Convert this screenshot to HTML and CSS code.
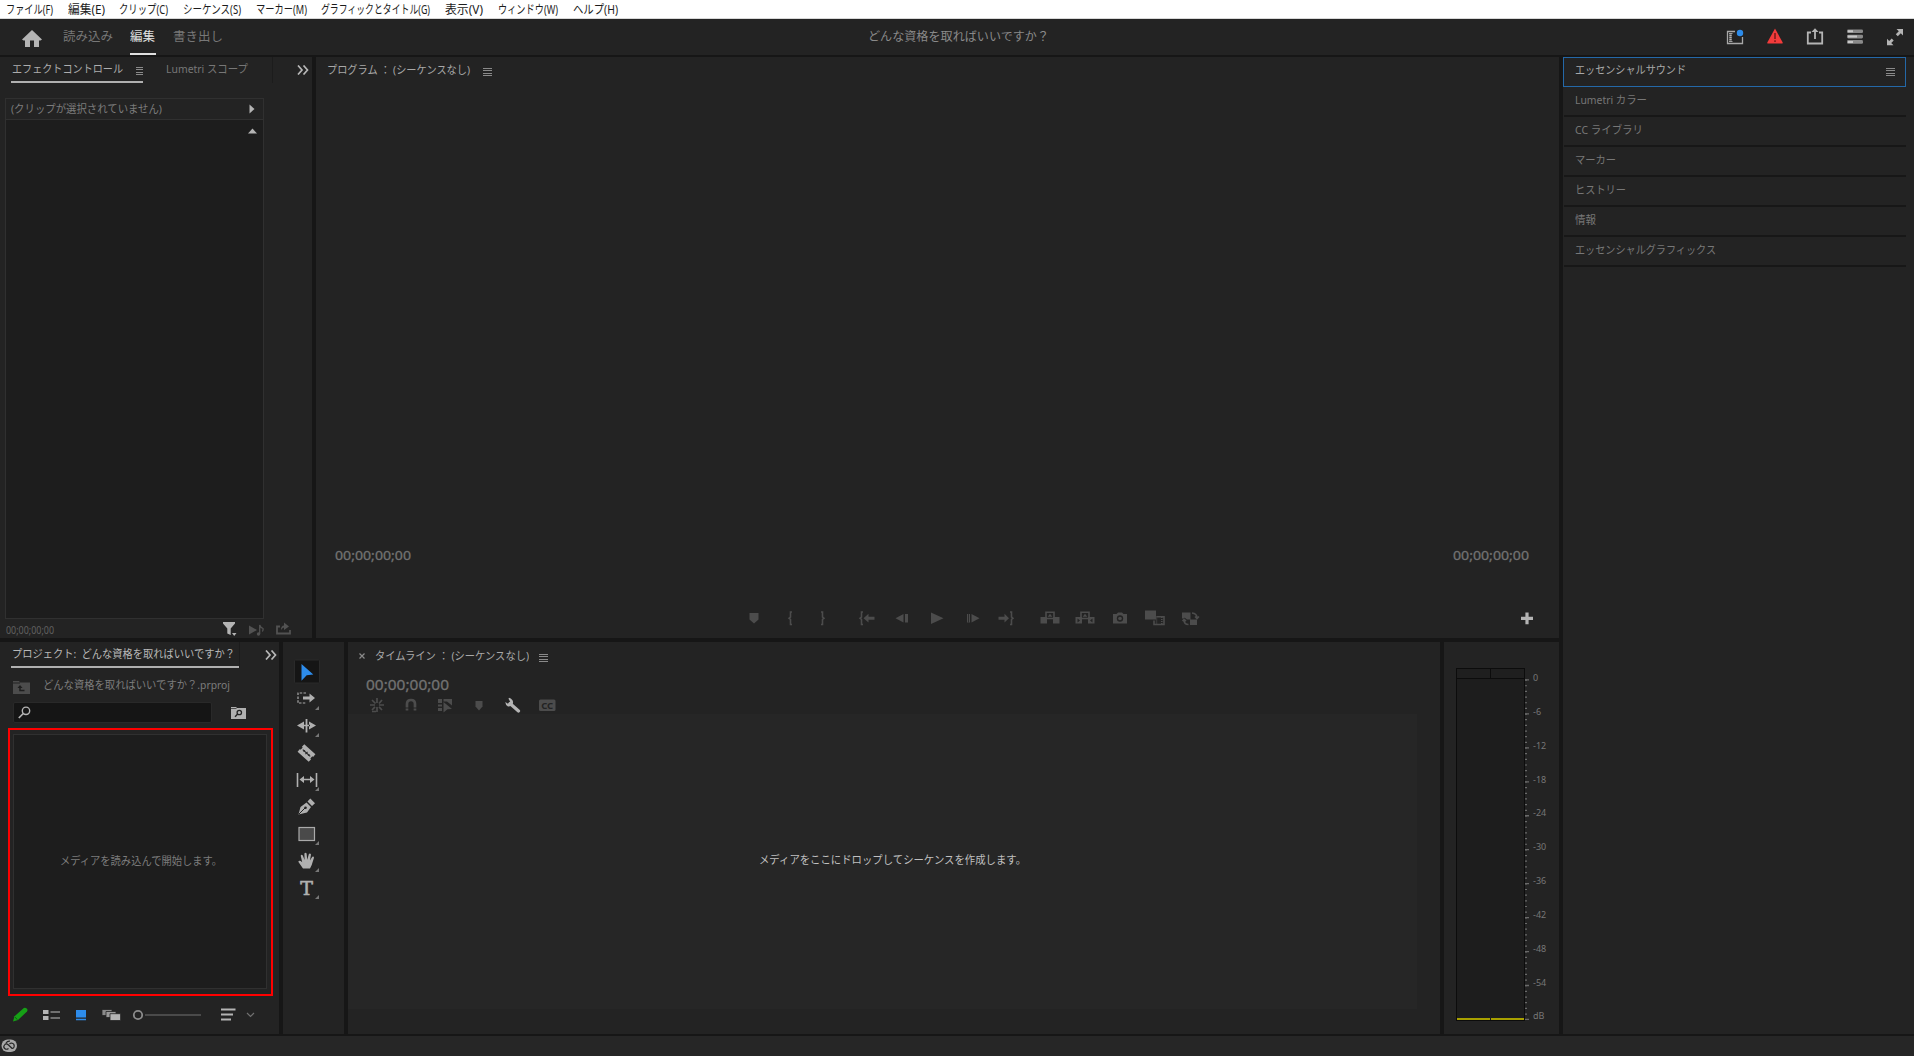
FILE: index.html
```
<!DOCTYPE html>
<html lang="ja">

<head>
    <meta charset="UTF-8">
    <title>どんな資格を取ればいいですか？</title>
    <link rel="stylesheet" href="styles.css">
</head>

<body>

    <nav class="menubar">
        <span class="fit" data-w="47">ファイル(F)</span>
        <span class="fit" data-w="37">編集(E)</span>
        <span class="fit" data-w="49">クリップ(C)</span>
        <span class="fit" data-w="58">シーケンス(S)</span>
        <span class="fit" data-w="51">マーカー(M)</span>
        <span class="fit" data-w="109">グラフィックとタイトル(G)</span>
        <span class="fit" data-w="38">表示(V)</span>
        <span class="fit" data-w="60">ウィンドウ(W)</span>
        <span class="fit" data-w="45">ヘルプ(H)</span>
    </nav>

    <header class="header">
        <svg class="home" width="20" height="18" viewBox="0 0 20 18"><path d="M10 0 20 9.500 18.500 10.500H17V17H12V10.500H8V17H3V10.500H1.500L0 9.500Z" fill="#b4b4b4"/></svg>
        <div class="modes">
            <span class="mode"><span class="fit" data-w="50">読み込み</span></span>
            <span class="mode active"><span class="fit" data-w="25">編集</span></span>
            <span class="mode"><span class="fit" data-w="50">書き出し</span></span>
        </div>
        <div class="doc-title"><span class="fit" data-w="181">どんな資格を取ればいいですか？</span></div>
        <div class="header-icons">
            <svg width="20" height="20" viewBox="0 0 20 20"><path d="M10 4.500H2.500V16.500H17.500V10" fill="none" stroke="#a8a8a8" stroke-width="1.300"/><path d="M5.500 6V15" stroke="#b0b0b0" stroke-width="2.500" stroke-dasharray="1.500 .5"/><path d="M4 6.500H7.500M4 14.500H7.500" stroke="#a0a0a0"/><circle cx="15" cy="6" r="3.200" fill="#2d8ceb"/></svg>
            <svg width="20" height="20" viewBox="0 0 20 20"><path d="M10 1.500 17.700 15.500Q17.800 16.600 17 16.600H3Q2.200 16.600 2.300 15.500Z" fill="#f43b3b"/><path d="M10 6V12M10 13.200V15" stroke="#8f1f1f" stroke-width="1.800"/></svg>
            <svg width="20" height="20" viewBox="0 0 20 20"><path d="M6 5.500H2.800V16.500H17.200V5.500H14M10 12V3" fill="none" stroke="#b4b4b4" stroke-width="1.800"/><path d="M6.500 5 10 1.200 13.500 5Z" fill="#b4b4b4"/></svg>
            <svg width="20" height="20" viewBox="0 0 20 20"><g fill="#8a8a8a"><rect x="2" y="2.500" width="16" height="3.600" rx="1.300"/><rect x="2" y="7.800" width="16" height="3.600" rx="1.300"/><rect x="2" y="13.100" width="16" height="3.600" rx="1.300"/></g><path d="M3 4.300H8M3 9.600H12M3 14.900H8" stroke="#c8c8c8" stroke-width="2"/></svg>
            <svg width="20" height="20" viewBox="0 0 20 20"><path d="M11.500 2H18V8.500L15.800 6.300 12.800 9.300 10.800 7.300 13.800 4.300ZM8.500 18.200H2V11.700L4.200 13.900 6.700 11.400 8.700 13.400 6.200 15.900Z" fill="#b4b4b4"/></svg>
        </div>
    </header>

    <div class="workspace">
        <div class="main-area">
            <div class="upper">

                <!-- Effect controls -->
                <section class="panel effects">
                    <div class="tabs">
                        <div class="tab active"><span class="fit" data-w="111">エフェクトコントロール</span><i class="burger"></i></div>
                        <div class="tab"><span class="fit" data-w="82">Lumetri スコープ</span></div>
                        <i class="tab-line"></i>
                        <svg class="more" width="12" height="10" viewBox="0 0 12 10"><path d="M1 .5 5 5 1 9.500M6.500 .5 10.500 5 6.500 9.500" fill="none" stroke="#b8b8b8" stroke-width="1.700"/></svg>
                    </div>
                    <div class="clip-box">
                        <div class="clip-head">
                            <span class="fit" data-w="151">(クリップが選択されていません)</span>
                            <svg width="6" height="10" viewBox="0 0 6 10"><path d="M.5 .5V9.500L5.500 5Z" fill="#b4b4b4"/></svg>
                        </div>
                        <div class="clip-body">
                            <svg width="9" height="6" viewBox="0 0 9 6"><path d="M0 5.500H9L4.500 .5Z" fill="#b4b4b4"/></svg>
                        </div>
                    </div>
                    <div class="effects-foot">
                        <span class="fit" data-w="48">00;00;00;00</span>
                        <svg class="funnel" width="15" height="15" viewBox="0 0 15 15"><path d="M0 0H12V1.500L7.700 6.500V13L4.300 11.500V6.500L0 1.500ZM9 11H13.500L11.200 14Z" fill="#b4b4b4"/></svg>
                        <svg class="play-note" width="16" height="12" viewBox="0 0 16 12"><path d="M0 1.500V10.500L8 6Z" fill="#525252"/><path d="M10.700 10V1Q11.500 3.500 14 4.500 14.500 6 13.300 7.500" fill="none" stroke="#525252" stroke-width="1.300"/><circle cx="9.500" cy="10" r="1.700" fill="#525252"/></svg>
                        <svg class="export" width="16" height="13" viewBox="0 0 16 13"><path d="M4 4.500H1V11.500H14V8" fill="none" stroke="#525252" stroke-width="1.800"/><path d="M5 8Q5 3.500 8 3.500V.5L13 4.500 8 8V5.500Q6.500 5.500 5 8Z" fill="#525252"/></svg>
                    </div>
                </section>

                <!-- Program monitor -->
                <section class="panel program">
                    <div class="panel-title"><span class="fit" data-w="143">プログラム ： (シーケンスなし)</span><i class="burger"></i></div>
                    <div class="timecodes">
                        <span class="fit" data-w="76">00;00;00;00</span>
                        <span class="fit" data-w="76">00;00;00;00</span>
                    </div>
                    <div class="transport">
                        <svg viewBox="0 0 24 24"><path d="M7.500 7H16.500V13.500L12 17.500 7.500 13.500Z"/></svg>
                        <svg viewBox="0 0 24 24"><path class="line" d="M14 6H12.500V11L11 12.200 12.500 13.500V18.500H14"/></svg>
                        <svg viewBox="0 0 24 24"><path class="line" d="M10 6H11.500V11L13 12.200 11.500 13.500V18.500H10"/></svg>
                        <svg viewBox="0 0 24 24"><path class="line" d="M8 6H6.500V11L5 12.200 6.500 13.500V18.500H8"/><path d="M8.500 12.200 13.500 7.800V10.700H19.500V13.700H13.500V16.600Z"/></svg>
                        <svg viewBox="0 0 24 24"><path d="M5.500 12.200 13.500 8V16.500ZM15 8H18V16.500H15Z"/></svg>
                        <svg viewBox="0 0 24 24"><path d="M6 6.500V18L18.500 12.300Z"/></svg>
                        <svg viewBox="0 0 24 24"><path d="M18.500 12.200 10.500 8V16.500ZM6 8H9V16.500H6Z"/><path d="M7.500 8V16.500" stroke="#232323" stroke-width=".8"/></svg>
                        <svg viewBox="0 0 24 24"><path class="line" d="M16 6H17.500V11L19 12.200 17.500 13.500V18.500H16"/><path d="M15 12.200 10.500 7.800V10.700H4.500V13.700H10.500V16.600Z"/></svg>
                        <svg viewBox="0 0 24 24"><path d="M2.500 11H9V17.500H2.500ZM15 11H21.500V17.500H15ZM9.700 10.700H14.300L12 7.700Z"/><path class="line" d="M8 11V6.200H16V11M8.500 12.500H15.500"/></svg>
                        <svg viewBox="0 0 24 24"><path d="M2.500 11H9V17.500H2.500ZM15 11H21.500V17.500H15ZM9.700 10.700H14.300L12 7.700Z"/><path class="line" d="M8 11V6.200H16V11M8.500 12.500H15.500"/><path class="cut" d="M4.500 12.500V16.500L7 14.500ZM19.500 12.500V16.500L17 14.500Z"/></svg>
                        <svg viewBox="0 0 24 24"><path d="M5 8H8.500L10 6.500H14L15.500 8H19V17.500H5Z"/><circle class="cut" cx="12" cy="12.500" r="3.200"/><circle cx="12" cy="12.500" r="1.800"/></svg>
                        <svg viewBox="0 0 24 24"><path d="M2 4.500H13V13.500H2Z"/><path class="line" d="M13.500 10.800H21V18.500H11V14.500"/><path class="line" stroke-dasharray="1 1" d="M13.500 10.500V18.500M18.800 11V18.500"/></svg>
                        <svg viewBox="0 0 24 24"><path d="M4 6.500H12.500V13.500H9L6.500 11.500V12.500H4ZM12 13.500H19V19H12Z"/><path class="line" d="M14 7Q19 7.500 19 12M17 10.500 19 12.500 21 10.500M6 14Q6 18.500 10.500 18.500M4.500 15 6 13.500 8 15"/></svg>
                        <svg class="plus" viewBox="0 0 24 24"><path d="M10.400 6.400H13.600V10.700H18V13.900H13.600V18.200H10.400V13.900H6V10.700H10.400Z"/></svg>
                    </div>
                </section>
            </div>

            <div class="lower">

                <!-- Project bin -->
                <section class="panel project">
                    <div class="tabs">
                        <div class="tab active"><span class="fit" data-w="223">プロジェクト:  どんな資格を取ればいいですか？</span></div>
                        <i class="tab-line"></i>
                        <svg class="more" width="12" height="10" viewBox="0 0 12 10"><path d="M1 .5 5 5 1 9.500M6.500 .5 10.500 5 6.500 9.500" fill="none" stroke="#b8b8b8" stroke-width="1.700"/></svg>
                    </div>
                    <div class="bin-path">
                        <svg width="17" height="13" viewBox="0 0 17 13"><path d="M0 0H6L7 1.500H17V13H0Z" fill="#4c4c4c"/><path d="M0 2H7" stroke="#232323"/><path d="M11.500 9.500H7V6" fill="none" stroke="#1e1e1e" stroke-width="1.500"/><path d="M4.500 7 7 4 9.500 7Z" fill="#1e1e1e"/></svg>
                        <span class="fit" data-w="187">どんな資格を取ればいいですか？.prproj</span>
                    </div>
                    <div class="search-row">
                        <div class="search-box"><svg width="13" height="13" viewBox="0 0 13 13"><circle cx="8" cy="4.800" r="3.700" fill="none" stroke="#b4b4b4" stroke-width="1.400"/><path d="M5.300 7.500.8 12" stroke="#b4b4b4" stroke-width="1.700"/></svg></div>
                        <svg width="15" height="12" viewBox="0 0 15 12"><path d="M0 0H5L6 1H15V12H0Z" fill="#b0b0b0"/><path d="M0 1.500H5.500" stroke="#232323" stroke-width=".7"/><circle cx="8.300" cy="5.500" r="2.200" fill="none" stroke="#232323" stroke-width="1.300"/><path d="M6.700 7 4 9.800" stroke="#232323" stroke-width="1.400"/></svg>
                    </div>
                    <div class="highlight">
                        <div class="dropzone"><span class="fit" data-w="162">メディアを読み込んで開始します。</span></div>
                    </div>
                    <div class="bin-tools">
                        <svg width="15" height="15" viewBox="0 0 15 15"><path d="M0 14.500 1.500 9.300 10.800 1Q12.300 .2 13.700 1.500T14 4.500L5 13Z" fill="#16a016"/><path d="M1.800 10 4.500 12.700" stroke="#0d5a10"/></svg>
                        <svg width="17" height="12" viewBox="0 0 17 12"><path d="M0 1H5.500V5H0ZM0 7H5.500V11H0Z" fill="#b4b4b4"/><path d="M7.500 3H17M7.500 9H17" stroke="#8a8a8a" stroke-width="1.300"/></svg>
                        <svg width="12" height="12" viewBox="0 0 12 12"><path d="M1 1H11V8.500H1ZM1 9.800H11V11.200H1Z" fill="#2d8ceb"/></svg>
                        <svg width="19" height="12" viewBox="0 0 19 12"><g stroke="#232323" stroke-width=".8"><path d="M0 .5H10V6.500H0Z" fill="#8a8a8a"/><path d="M4 2.500H14V8.500H4Z" fill="#999"/><path d="M8 4.700H18.600V11.500H8Z" fill="#b4b4b4"/></g></svg>
                        <svg class="zoom" width="70" height="12" viewBox="0 0 70 12"><circle cx="6" cy="6" r="4.200" fill="none" stroke="#8c8c8c" stroke-width="1.800"/><path d="M13 6H69" stroke="#4a4a4a" stroke-width="1.800"/></svg>
                        <svg class="sort" width="15" height="13" viewBox="0 0 15 13"><path d="M0 1.500H14.500M0 6.500H12M0 11.500H10" stroke="#b4b4b4" stroke-width="2"/></svg>
                        <svg class="chevron" width="9" height="6" viewBox="0 0 9 6"><path d="M1 1 4.500 4.500 8 1" fill="none" stroke="#707070" stroke-width="1.200"/></svg>
                    </div>
                </section>

                <!-- Tools -->
                <section class="panel tools">
                    <svg viewBox="0 0 27 27"><rect x="1.500" y="2" width="25" height="23" rx="1" fill="#151515" stroke="#2a2a2a"/><path d="M8.500 6 20.300 16.500 13.700 17.300 8.500 22.700Z" fill="#2d8ceb"/></svg>
                    <svg viewBox="0 0 27 27"><path d="M13 8H5V18H13" fill="none" stroke="#aaa" stroke-width="1.200" stroke-dasharray="2.500 1.300"/><path d="M10 11.500H16.500V8.500L22 13 16.500 17.500V14.500H10Z"/><path class="corner" d="M26 21V25H22Z"/></svg>
                    <svg viewBox="0 0 27 27"><path d="M12.600 7H14.400V20.500H12.600ZM4 13.500 11 9.500V17.500ZM23 13.500 16 9.500V17.500ZM10 12.700H17V14.300H10Z"/><path class="corner" d="M26 21V25H22Z"/></svg>
                    <svg viewBox="0 0 27 27"><g transform="rotate(42 13.500 14)"><path d="M6 9H21V12.500H20V15.500H21V19H6V15.500H7V12.500H6Z"/><path d="M8.500 14H18.500" stroke="#232323" stroke-width="1.200"/><path d="M10.500 13V15M13.500 12.500V15.500M16.500 13V15" stroke="#232323"/></g></svg>
                    <svg viewBox="0 0 27 27"><path d="M3.700 7H5.300V21H3.700ZM22.700 7H24.300V21H22.700ZM6.500 13.500 11 10V12.800H17V10L21.500 13.500 17 17V14.300H11V17Z"/><path class="corner" d="M26 21V25H22Z"/></svg>
                    <svg viewBox="0 0 27 27"><path d="M5.500 21.500 7.500 14 13.500 9.500 18 14 14 19.500ZM14.500 8.500 17.300 5.500 22 10.200 19 13Z"/><path d="M6 21 12 15" stroke="#232323" stroke-width="1"/><circle cx="12.500" cy="14.800" r="1.300" fill="#232323"/></svg>
                    <svg viewBox="0 0 27 27"><rect x="6" y="7.500" width="15.500" height="13" fill="#4a4a4a" stroke="#aaa" stroke-width="1.200"/><path class="corner" d="M26 21V25H22Z"/></svg>
                    <svg viewBox="0 0 27 27"><path d="M10 21.500 5.300 14.700Q6.300 12.800 9.200 15.200L7.700 8.700Q8.300 7 9.800 8.500L11.600 13 11.400 6.400Q12.500 5 13.600 6.400L14.200 12.700 15.900 6.900Q17.300 5.900 18 7.500L17 13.500 19.300 9.700Q20.800 9.100 21 10.700L18.700 18 17 21.500Z"/><path class="corner" d="M26 21V25H22Z"/></svg>
                    <svg viewBox="0 0 27 27"><text x="13.500" y="20.500" text-anchor="middle" class="type-tool">T</text><path class="corner" d="M26 21V25H22Z"/></svg>
                </section>

                <!-- Timeline -->
                <section class="panel timeline">
                    <div class="panel-title">
                        <svg width="6" height="6" viewBox="0 0 6 6"><path d="M.5 .5 5.500 5.500M5.500 .5.5 5.500" stroke="#8a8a8a" stroke-width="1.200"/></svg>
                        <span class="fit" data-w="154">タイムライン ： (シーケンスなし)</span><i class="burger"></i>
                    </div>
                    <div class="sequence-time"><span class="fit" data-w="83">00;00;00;00</span></div>
                    <div class="sequence-tools">
                        <svg viewBox="0 0 20 16"><path d="M10 1V6M10 10V15M3 8H8M12 8H17M5 3 8.500 6.500M15 3 12 6.500M5 13 8 9.800M12 9.800 15 13M5 14.500H9" stroke="#4c4c4c" stroke-width="1.700"/></svg>
                        <svg viewBox="0 0 20 16"><path d="M6 13.500V7Q6 3 10 3T14 7V13.500" fill="none" stroke="#4c4c4c" stroke-width="2.700"/><path d="M4 11H16" stroke="#232323"/></svg>
                        <svg viewBox="0 0 20 16"><path d="M3 2H7V6H3ZM3 7.500H7V9.500H3ZM3 11H7V14H3ZM8.500 2H17V8.500L12 4.500H8.500ZM8.500 5 17 12 12.500 12.300 8.500 15.500Z" fill="#4c4c4c"/></svg>
                        <svg viewBox="0 0 20 16"><path d="M6.500 4H13.500V9.500L10 13.500 6.500 9.500Z" fill="#4c4c4c"/></svg>
                        <svg viewBox="0 0 20 16"><path d="M7 6.500 15.500 14" stroke="#b4b4b4" stroke-width="3.200" stroke-linecap="round"/><path d="M6 .8Q10.500 2.500 10 6T5 9.500Q2.500 8.500 2.300 5L5 6.800 7.200 4.800 5.500 1.800Z" fill="#b4b4b4"/></svg>
                        <svg viewBox="0 0 20 16"><rect x="2" y="2.500" width="16.500" height="11.500" rx="1.500" fill="#4c4c4c"/><text x="10.200" y="12.200" text-anchor="middle" class="cc">CC</text></svg>
                    </div>
                    <div class="sequence-body"><span class="fit" data-w="267">メディアをここにドロップしてシーケンスを作成します。</span></div>
                </section>

                <!-- Audio meters -->
                <section class="panel meters">
                    <div class="meter">
                        <div class="peaks"><i></i><i></i></div>
                        <div class="levels"><i></i><i></i></div>
                    </div>
                    <svg class="ticks" width="5" height="342" viewBox="0 0 5 342"><path d="M1 .5V341" stroke="#6a6a6a" stroke-width="2" stroke-dasharray="1.200 4.460"/><path d="M2 .3V341.500" stroke="#6a6a6a" stroke-width="4" stroke-dasharray="1.300 32.650"/></svg>
                    <div class="db">
                        <span>0</span><span>-6</span><span>-12</span><span>-18</span><span>-24</span><span>-30</span><span>-36</span><span>-42</span><span>-48</span><span>-54</span><span>dB</span>
                    </div>
                </section>
            </div>
        </div>

        <aside class="panel side">
            <div class="side-item current"><span class="fit" data-w="111">エッセンシャルサウンド</span><i class="burger"></i></div>
            <div class="side-item"><span class="fit" data-w="72">Lumetri カラー</span></div>
            <div class="side-item"><span class="fit" data-w="68">CC ライブラリ</span></div>
            <div class="side-item"><span class="fit" data-w="41">マーカー</span></div>
            <div class="side-item"><span class="fit" data-w="51">ヒストリー</span></div>
            <div class="side-item"><span class="fit" data-w="21">情報</span></div>
            <div class="side-item"><span class="fit" data-w="141">エッセンシャルグラフィックス</span></div>
        </aside>
    </div>

    <footer class="status">
        <svg width="17" height="14" viewBox="0 0 17 14"><rect x=".5" y=".5" width="15.500" height="12.500" rx="6.200" fill="#a8a8a8"/><path d="M7.500 9.500Q5.500 11 3.700 9.500T3.500 6Q5 4 7.200 5.800L11 9.300Q13 9.500 13.200 7T10.500 4Q9.500 4 8.500 5M5 4Q6.500 1.800 9 2.200" fill="none" stroke="#262626" stroke-width="1.200"/></svg>
    </footer>

    <script>
        // Squeeze each label to its UI width
        document.querySelectorAll('.fit').forEach(el => {
            const natural = el.getBoundingClientRect().width;
            const target = Number(el.dataset.w);
            el.style.transform = `scaleX(${target / natural})`;
            el.style.marginRight = `${target - natural}px`;
        });
    </script>

</body>

</html>
```
FILE: styles.css
```
/* General Styles */

* {
    box-sizing: border-box;
}

body {
    margin: 0;
    width: 1914px;
    height: 1056px;
    overflow: hidden;
    display: flex;
    flex-direction: column;
    background-color: #161616;
    color: #a8a8a8;
    font-family: "Noto Sans", "Noto Sans CJK JP", sans-serif;
    font-size: 11px;
    line-height: 14px;
    white-space: nowrap;
}

svg {
    display: block;
    flex-shrink: 0;
}

.fit {
    display: inline-block;
    flex-shrink: 0;
    transform-origin: 0 50%;
    white-space: pre;
}

.panel {
    background-color: #232323;
    flex-shrink: 0;
}

.burger {
    width: 9px;
    height: 8px;
    margin-top: 4px;
    background: repeating-linear-gradient(#8a8a8a 0 1px, #232323 1px 2.33px);
}

/* Menu bar and header */

.menubar {
    height: 19px;
    flex-shrink: 0;
    display: flex;
    align-items: center;
    gap: 14.7px;
    padding: 1px 0 0 6px;
    background-color: #fff;
    border-bottom: 1px solid #d8d8d8;
    color: #1c1c1c;
    font-size: 12px;
}

.header {
    height: 38px;
    flex-shrink: 0;
    display: flex;
    background-color: #232323;
    border-bottom: 2px solid #161616;
    font-size: 12.5px;
}

.home {
    margin: 11px 0 0 22px;
}

.modes {
    display: flex;
    width: 805px;
    margin-left: 21px;
    gap: 17px;
    color: #777;
}

.mode {
    height: 36px;
    padding-top: 11px;
}

.mode.active {
    padding-right: 1px;
    color: #e0e0e0;
    border-bottom: 2px solid #e0e0e0;
}

.doc-title {
    width: 855px;
    padding-top: 11px;
    color: #8a8a8a;
    font-size: 12px;
}

.header-icons {
    display: flex;
    gap: 20px;
    margin: 8px 0 0 2px;
}

/* Panel grid */

.workspace {
    display: flex;
    gap: 4px;
    height: 977px;
    flex-shrink: 0;
}

.main-area {
    width: 1559px;
    flex-shrink: 0;
    display: flex;
    flex-direction: column;
    gap: 4px;
}

.upper,
.lower {
    display: flex;
    gap: 4px;
}

.upper {
    height: 581px;
}

.lower {
    height: 392px;
}

/* Tabs */

.tabs {
    display: flex;
    height: 26px;
}

.tab {
    display: flex;
    align-items: center;
    color: #777;
}

.tab.active {
    color: #adadad;
    border-bottom: 2px solid #b0b0b0;
}

.tab-line {
    width: 1px;
    background-color: #1c1c1c;
}

.more {
    margin-top: 8px;
}

.panel-title {
    display: flex;
    align-items: center;
    height: 26px;
}

/* Effect controls */

.effects {
    width: 312px;
}

.effects .tab.active {
    width: 132px;
    margin-left: 11px;
    padding-left: 1px;
    gap: 13px;
}

.effects .tab:nth-child(2) {
    width: 106px;
    margin-left: 23px;
    padding-bottom: 2px;
}

.effects .more {
    margin-left: 24px;
}

.clip-box {
    width: 259px;
    height: 521px;
    margin: 15px 0 0 5px;
    border: 1px solid #303030;
    display: flex;
    flex-direction: column;
}

.clip-head {
    height: 21px;
    flex-shrink: 0;
    display: flex;
    align-items: center;
    justify-content: space-between;
    padding: 0 8px 1px 5px;
    border-bottom: 1px solid #303030;
    color: #7c7c7c;
}

.clip-body {
    flex: 1;
    display: flex;
    justify-content: flex-end;
    padding: 8px 6px;
    background-color: #1d1d1d;
}

.effects-foot {
    display: flex;
    align-items: center;
    height: 19px;
    padding: 2px 0 0 6px;
    color: #606060;
    font-size: 10.5px;
}

.funnel {
    margin-left: 169px;
}

.play-note {
    margin-left: 11px;
}

.export {
    margin-left: 11px;
    margin-bottom: 2px;
}

/* Program monitor */

.program {
    width: 1243px;
    padding-left: 11px;
}

.program .panel-title {
    gap: 13px;
}

.timecodes {
    display: flex;
    justify-content: space-between;
    margin-top: 463px;
    padding: 0 30px 0 8px;
    color: #727272;
    font-size: 13px;
    line-height: 18px;
    -webkit-text-stroke: 0.3px #727272;
}

.transport {
    display: flex;
    gap: 11px;
    margin: 42px 0 0 415px;
}

.transport svg {
    width: 24px;
    height: 24px;
    fill: #4c4c4c;
}

.transport svg:nth-child(2),
.transport svg:nth-child(7) {
    margin-left: 1px;
}

.transport svg:nth-child(3),
.transport svg:nth-child(8) {
    margin-left: -2px;
}

.transport svg:nth-child(4),
.transport svg:nth-child(9) {
    margin-left: 9px;
}

.transport .line {
    fill: none;
    stroke: #4c4c4c;
    stroke-width: 1.6;
}

.transport .cut {
    fill: #232323;
}

.transport .plus {
    margin-left: 302px;
    fill: #b4b4b4;
}

/* Project bin */

.project {
    width: 279px;
}

.project .tab.active {
    width: 228px;
    margin-left: 11px;
    padding-left: 1px;
    color: #b8b8b8;
}

.project .more {
    margin-left: 25px;
}

.bin-path {
    display: flex;
    align-items: center;
    gap: 13px;
    height: 16px;
    margin: 9px 0 0 13px;
    color: #7c7c7c;
}

.bin-path svg {
    margin-top: 4px;
}

.search-row {
    display: flex;
    align-items: center;
    gap: 19px;
    margin: 9px 0 0 13px;
}

.search-box {
    width: 199px;
    height: 21px;
    padding: 3px 4px;
    background-color: #151515;
    border: 1px solid #292929;
    border-radius: 2px;
}

.highlight {
    width: 265px;
    height: 268px;
    margin: 5px 0 0 8px;
    padding: 4px 4px 5px 3px;
    border: 2px solid #f00;
}

.dropzone {
    height: 255px;
    display: flex;
    align-items: center;
    justify-content: center;
    padding: 0 0 2px 2px;
    background-color: #1d1d1d;
    border: 1px solid #303030;
    color: #7c7c7c;
}

.bin-tools {
    display: flex;
    align-items: center;
    gap: 15px;
    margin: 11px 0 0 13px;
}

.bin-tools .zoom {
    margin-left: -4px;
}

.bin-tools .sort {
    margin-left: 4px;
}

.bin-tools .chevron {
    margin-left: -5px;
}

/* Tools */

.tools {
    width: 61px;
    padding: 16px 0 0 10px;
}

.tools svg {
    width: 27px;
    height: 27px;
    fill: #b0b0b0;
}

.tools .corner {
    fill: #777;
}

.type-tool {
    font-family: "DejaVu Serif", serif;
    font-size: 19px;
    stroke: #b0b0b0;
    stroke-width: 0.6px;
}

/* Timeline */

.timeline {
    width: 1092px;
}

.timeline .panel-title {
    gap: 10px;
    padding: 1px 0 0 11px;
}

.sequence-time {
    padding: 6px 0 0 18px;
    color: #727272;
    font-size: 14.5px;
    line-height: 20px;
    -webkit-text-stroke: 0.3px #727272;
}

.sequence-tools {
    display: flex;
    gap: 14px;
    margin: 3px 0 0 19px;
}

.sequence-tools svg {
    width: 20px;
    height: 16px;
}

.cc {
    fill: #232323;
    font-size: 9.5px;
    font-weight: bold;
}

.sequence-body {
    display: flex;
    align-items: center;
    justify-content: center;
    width: 1069px;
    height: 295px;
    margin-top: 1px;
    padding: 0 0 3px 20px;
    background-color: #262626;
    color: #c0c0c0;
}

/* Audio meters */

.meters {
    width: 115px;
    display: flex;
    padding: 26px 0 0 12px;
}

.meter {
    width: 69px;
    height: 353px;
    display: flex;
    flex-direction: column;
    border: 1px solid #0c0c0c;
    background-color: #1d1d1d;
}

.peaks,
.levels {
    display: flex;
    gap: 1px;
}

.peaks {
    height: 10px;
    background-color: #0c0c0c;
    border-bottom: 1px solid #0c0c0c;
}

.peaks i {
    flex: 1;
    background-color: #1f1f1f;
}

.levels {
    flex: 1;
    align-items: flex-end;
}

.levels i {
    flex: 1;
    height: 2px;
    background-color: #a8a000;
}

.ticks {
    margin-top: 11px;
}

.db {
    display: flex;
    flex-direction: column;
    margin: 3px 0 0 3px;
    color: #777;
    font-size: 9px;
}

.db span {
    height: 33.85px;
    flex-shrink: 0;
}

/* Side panels */

.side {
    flex: 1;
}

.side-item {
    width: 342px;
    height: 30px;
    margin-left: 1px;
    padding: 0 11px 2px;
    border-bottom: 2px solid #171717;
    display: flex;
    align-items: center;
    color: #777;
}

.side-item.current {
    width: 343px;
    margin-left: 0;
    padding: 0 10px 4px 11px;
    justify-content: space-between;
    border: 1px solid #2468a8;
    color: #a8a8a8;
}

/* Status bar */

.status {
    height: 20px;
    margin-top: 2px;
    padding: 3px 0 0 1px;
    background-color: #262626;
}
```
